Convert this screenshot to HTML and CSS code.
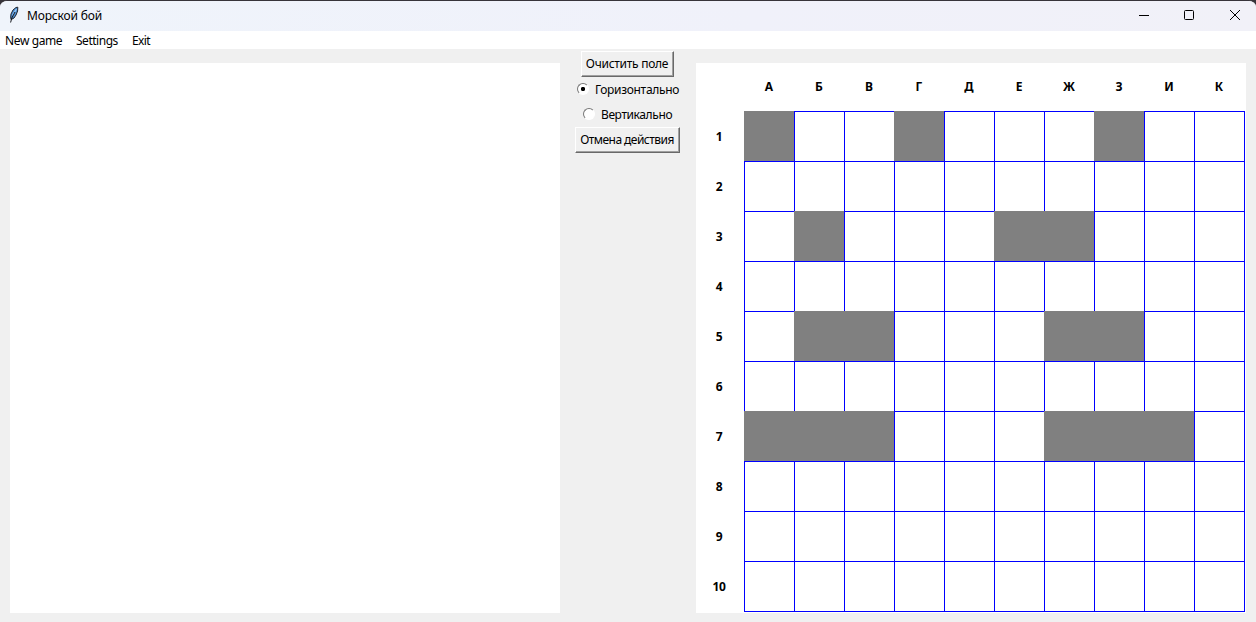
FILE: index.html
```html
<!DOCTYPE html>
<html lang="ru">
<head>
<meta charset="utf-8">
<title>Морской бой</title>
<link rel="stylesheet" href="styles.css">
</head>
<body>
<div class="window">
  <header class="titlebar">
    <svg class="feather" width="12" height="18" viewBox="0 0 12 18">
      <path d="M3 13.5L2.7 11L3 8L5 4L8 1.5L9.8 1.2L9.6 5L8 9L6 12L3.8 13.2Z" fill="#4d8fd6" stroke="#20242c" stroke-width="1"/>
      <path d="M4.6 9.5L8.4 3" stroke="#9ccbf5" stroke-width="1.3"/>
      <path d="M2.6 16.5L3.8 12L7 6" fill="none" stroke="#15171c" stroke-width="1"/>
    </svg>
    <span class="title">Морской бой</span>
    <svg class="controls" width="102" height="12" viewBox="0 0 102 12" fill="none" stroke="#000">
      <path d="M0 6.5H10"/>
      <rect x="45.5" y="1.5" width="9" height="9" rx="1"/>
      <path d="M91 1L101 11M101 1L91 11"/>
    </svg>
  </header>
  <nav class="menu">
    <span class="new">New game</span><span class="settings">Settings</span><span class="exit">Exit</span>
  </nav>
  <main class="content">
    <section class="board"></section>
    <section class="panel">
      <button class="btn clear">Очистить поле</button>
      <label class="radio horizontal"><span class="dot on"></span><span class="caption">Горизонтально</span></label>
      <label class="radio vertical"><span class="dot"></span><span class="caption">Вертикально</span></label>
      <button class="btn undo">Отмена действия</button>
    </section>
    <section class="board field">
      <div class="letters"><span>А</span><span>Б</span><span>В</span><span>Г</span><span>Д</span><span>Е</span><span>Ж</span><span>З</span><span>И</span><span>К</span></div>
      <div class="numbers"><span>1</span><span>2</span><span>3</span><span>4</span><span>5</span><span>6</span><span>7</span><span>8</span><span>9</span><span>10</span></div>
      <div class="grid">
        <i class="ship"></i><i></i><i></i><i class="ship"></i><i></i><i></i><i></i><i class="ship"></i><i></i><i></i>
        <i></i><i></i><i></i><i></i><i></i><i></i><i></i><i></i><i></i><i></i>
        <i></i><i class="ship"></i><i></i><i></i><i></i><i class="ship"></i><i class="ship"></i><i></i><i></i><i></i>
        <i></i><i></i><i></i><i></i><i></i><i></i><i></i><i></i><i></i><i></i>
        <i></i><i class="ship"></i><i class="ship"></i><i></i><i></i><i></i><i class="ship"></i><i class="ship"></i><i></i><i></i>
        <i></i><i></i><i></i><i></i><i></i><i></i><i></i><i></i><i></i><i></i>
        <i class="ship"></i><i class="ship"></i><i class="ship"></i><i></i><i></i><i></i><i class="ship"></i><i class="ship"></i><i class="ship"></i><i></i>
        <i></i><i></i><i></i><i></i><i></i><i></i><i></i><i></i><i></i><i></i>
        <i></i><i></i><i></i><i></i><i></i><i></i><i></i><i></i><i></i><i></i>
        <i></i><i></i><i></i><i></i><i></i><i></i><i></i><i></i><i></i><i></i>
      </div>
    </section>
  </main>
</div>
</body>
</html>
```
FILE: styles.css
```css
* { box-sizing: border-box; }
body {
  margin: 0;
  background: #37343a;
  font: 12px/18px "Noto Sans", "Open Sans", sans-serif;
  color: #000;
}
.window {
  height: 622px;
  border-top: 1px solid #37343a;
  border-radius: 7px 7px 0 0;
  background: #f0f0f0;
  overflow: hidden;
}
.titlebar {
  display: flex;
  align-items: center;
  height: 30px;
  padding: 0 15px 0 8px;
  background: linear-gradient(90deg, #eff4fb, #f0f1fa 60%, #f1f1f8);
}
.feather { margin: 0 7px 2px 0; }
.title { letter-spacing: -0.15px; }
.controls { margin: 0 0 2px auto; }
.menu {
  display: flex;
  height: 18px;
  padding: 1px 0 0 5px;
  gap: 14px;
  background: #fff;
  letter-spacing: -0.38px;
}
.new { width: 57px; }
.settings { width: 42px; letter-spacing: -0.48px; }
.exit { letter-spacing: -0.6px; }
.menu span { white-space: nowrap; }
.content {
  display: flex;
  height: 573px;
  padding: 0 10px;
}
.board {
  width: 550px;
  height: 550px;
  margin-top: 14px;
  background: #fff;
}
.panel {
  display: flex;
  flex-direction: column;
  align-items: center;
  width: 136px;
  padding: 2px 1px 0 0;
}
.btn {
  height: 26px;
  padding: 0 1px 0 0;
  border: 1px solid;
  border-color: #fff #696969 #696969 #fff;
  box-shadow: inset -1px -1px #a0a0a0;
  background: #f0f0f0;
  color: #000;
  font: inherit;
  white-space: nowrap;
}
.clear { width: 93px; letter-spacing: -0.28px; }
.undo { width: 105px; letter-spacing: -0.53px; }
.radio {
  display: flex;
  align-items: center;
  height: 25px;
}
.horizontal { width: 101px; letter-spacing: -0.32px; }
.vertical { width: 89px; letter-spacing: -0.4px; }
.caption { margin-left: 6px; white-space: nowrap; }
.dot {
  flex: none;
  width: 12px;
  height: 12px;
  margin-top: -2px;
  border: 1px solid;
  border-color: #777 #fff #fff #777;
  border-radius: 50%;
  background: #fff;
}
.on { background: radial-gradient(circle, #000 1.8px, #fff 2.5px); }
.field {
  display: grid;
  grid-template: 48px 501px / 48px 501px;
  font-weight: 700;
}
.letters {
  grid-column: 2;
  display: grid;
  grid-template-columns: repeat(10, 50px);
  align-items: center;
  text-align: center;
}
.numbers {
  display: grid;
  grid-template-rows: repeat(10, 50px);
  align-items: center;
  text-align: center;
  padding: 1px 2px 0 0;
  letter-spacing: -0.3px;
}
.grid {
  display: grid;
  grid-template: repeat(10, 50px) / repeat(10, 50px);
  border: solid #00f;
  border-width: 0 1px 1px 0;
}
.grid i {
  border: solid #00f;
  border-width: 1px 0 0 1px;
}
.grid .ship {
  border-color: #808080;
  background: #808080;
}
```
